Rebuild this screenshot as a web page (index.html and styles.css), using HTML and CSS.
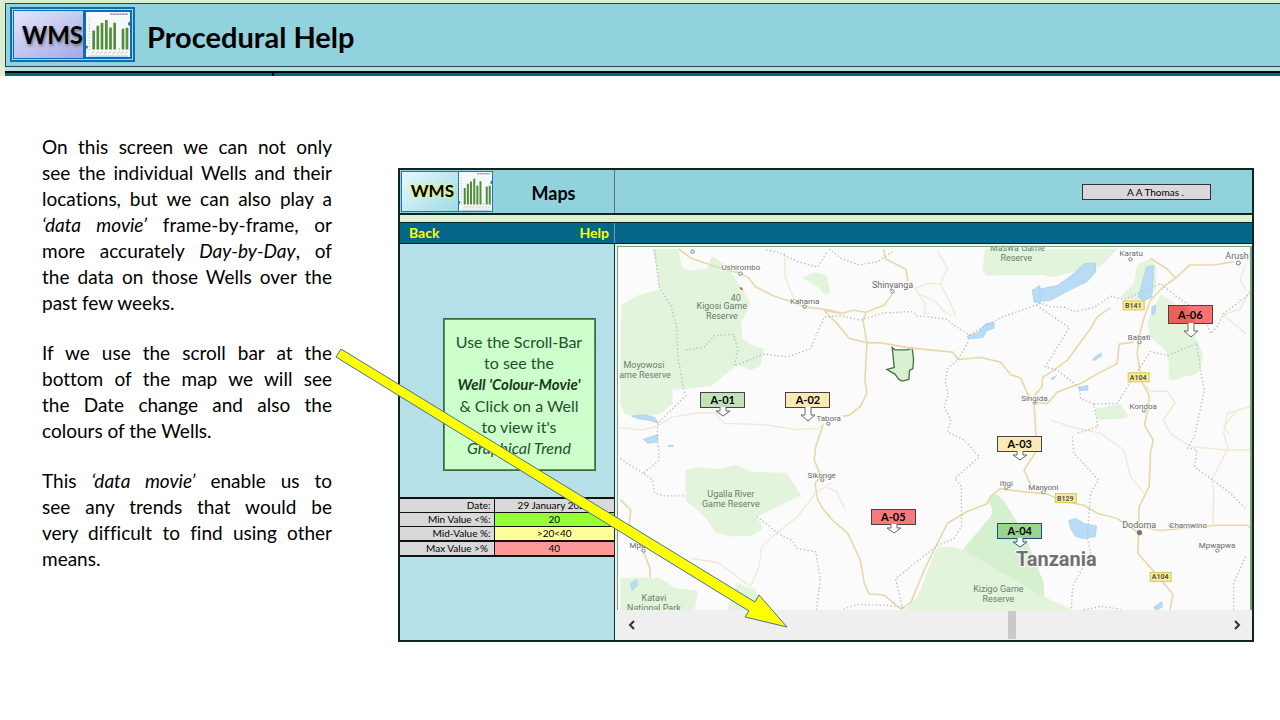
FILE: index.html
```html
<!DOCTYPE html>
<html lang="en">
<head>
<meta charset="utf-8">
<title>WMS Procedural Help</title>
<link rel="stylesheet" href="styles.css">
</head>
<body>
<svg class="defs" aria-hidden="true">
  <symbol id="chart" viewBox="0 0 132 148" preserveAspectRatio="none">
    <rect width="132" height="148" fill="#f7f8f9"/>
    <path d="M73 7h52" stroke="#777" stroke-width="4" stroke-dasharray="7 2"/>
    <path d="M10 22v104" stroke="#999" stroke-width="4" stroke-dasharray="2 8"/>
    <path d="M23 61v62M35.500 45v78M48 36v87M61 26v97M73.500 51v72M86 35v88M111 55v68M123 52v71" stroke="#4f8f3a" stroke-width="8"/>
    <path d="M17 138l8-9M29 138l8-9M41 138l8-9M54 138l8-9M67 138l8-9M80 138l8-9M92 138l8-9M104 138l8-9M116 138l8-9" stroke="#999" stroke-width="2"/>
    <path d="M8 145h118" stroke="#8fc0e4" stroke-width="3"/>
    <path d="M97 122h5" stroke="#7d98c9" stroke-width="3"/>
    <path d="M0 110l6 3-2 7-4 1z" fill="#2d7a46"/>
    <path d="M126 36l6-5v16l-5-4z" fill="#2d7a56"/>
  </symbol>
</svg>

<header class="banner">
  <div class="banner-main">
    <div class="logo logo-large">
      <span class="logo-text">WMS</span>
      <svg class="logo-chart"><use href="#chart"/></svg>
    </div>
    <h1>Procedural Help</h1>
  </div>
  <div class="banner-rule"></div>
</header>

<main>
  <article class="copy">
    <p>On this screen we can not only see&nbsp;the individual Wells and their locations, but we can also play a <em>‘data movie’</em> frame-by-frame, or more accurately <em>Day-by-Day</em>, of the data on those Wells over the past few weeks.</p>
    <p>If we use the scroll bar at the bottom of the map we will see the&nbsp;Date change and also the colours&nbsp;of the Wells.</p>
    <p>This <em>‘data movie’</em> enable us to see&nbsp;any trends that would be very&nbsp;difficult to find using other means.</p>
  </article>

  <section class="app">
    <div class="app-head">
      <div class="app-title">
        <div class="logo logo-small">
          <span class="logo-text">WMS</span>
          <svg class="logo-chart"><use href="#chart"/></svg>
        </div>
        <h2>Maps</h2>
      </div>
      <div class="app-user"><span class="user">A A Thomas .</span></div>
    </div>
    <nav class="app-nav">
      <div class="nav-links"><a href="#back">Back</a><a href="#help">Help</a></div>
    </nav>
    <div class="app-body">
      <aside class="side">
        <div class="note">Use the Scroll-Bar<br>to see the<br><b><i>Well 'Colour-Movie'</i></b><br>&amp; Click on a Well<br>to view it's<br><i>Graphical Trend</i></div>
        <table class="limits">
          <tr><th scope="row">Date:</th><td class="date">29 January 2021</td></tr>
          <tr><th scope="row">Min Value &lt;%:</th><td class="min">20</td></tr>
          <tr><th scope="row">Mid-Value %:</th><td class="mid">&gt;20&lt;40</td></tr>
          <tr><th scope="row">Max Value &gt;%&nbsp;</th><td class="max">40</td></tr>
        </table>
      </aside>
      <div class="viewer">
        <div class="map">
          <svg class="map-art" viewBox="0 0 633 364" preserveAspectRatio="none">
            <g transform="scale(.33333)">
              <!-- reserves -->
              <g class="park">
                <path d="M104 6H180L193 60L215 72L268 64L282 27L330 60L368 118L398 168L370 230L374 275L400 295L438 305L428 358L398 370L360 352L280 418L175 428L140 150L125 125z"/>
                <path d="M10 175L60 145L125 128L150 180L178 250L182 330L196 420L164 426V470L130 500L60 512L20 500L6 470z"/>
                <path d="M552 92L590 76L626 84L638 138L620 142L600 120z"/>
                <path d="M203 670L240 662L300 668L352 654L400 676L506 678L550 746L418 810L434 848L400 868L340 870L290 856L268 820L240 790L203 762z"/>
                <path d="M7 994H125L170 1024L240 1034L230 1092H7z"/>
                <path d="M358 1008L390 1024L410 1026L430 1060L440 1092H328z"/>
                <path d="M1103 6H1500L1450 58L1370 74L1300 92L1280 84L1105 86L1095 65z"/>
                <path d="M1600 34L1618 60L1616 130L1580 160L1530 158L1510 150L1550 110L1560 55z"/>
                <path d="M1630 142L1690 180L1745 290L1758 325L1750 370L1730 385L1700 390L1670 401L1655 398L1655 350L1645 310L1600 270L1590 230z"/>
                <path d="M1434 486L1510 472L1535 510L1520 516L1440 518z"/>
                <path d="M858 1092L900 1050L960 900L1010 902L1036 910L1300 1060L1370 1092z"/>
              </g>
              <path class="park-deep" d="M1118 746L1140 744L1160 764L1220 860L1280 1010V1052L1036 910L1120 810L1126 790L1116 770z"/>
              <path class="zone" d="M824 302L832 309H868L884 304L888 338L886 366L876 370L874 398L854 403L844 398L832 382L808 368L830 362z"/>
              <!-- lakes -->
              <g class="lake">
                <path d="M1250 166L1258 128L1320 116L1370 80L1400 50L1434 48L1436 74L1410 104L1360 128L1300 160z"/>
                <path d="M1588 60L1610 56L1604 150L1580 162L1564 150z"/>
                <path d="M1048 268L1080 258L1106 230L1130 226V244L1108 252L1096 272L1058 276z"/>
                <path d="M1244 130L1268 116V172L1250 162z"/>
                <path d="M1354 822L1376 816L1402 832L1438 838L1434 870L1400 876L1376 870L1362 850z"/>
                <path d="M1604 180L1616 174L1614 198L1604 204z"/>
                <path d="M1426 336L1452 318V328L1430 342zM1382 422L1412 416V430L1390 432zM1300 396L1318 386L1308 398z"/>
                <path d="M40 508L80 504L110 512L122 530L100 522L60 516zM76 578L118 564V586L90 590zM150 596h16v3h-16z"/>
                <path d="M38 1010L56 1000L58 1018L42 1032zM1610 1082L1634 1066L1636 1082L1616 1092z"/>
              </g>
              <!-- roads -->
              <g class="road">
                <path d="M182 6L220 34L290 58L370 80L392 92L414 120L470 148L520 164L562 180L640 190L672 200"/>
                <path d="M618 190L672 200L706 190L746 196L800 174L824 142"/>
                <path d="M618 190L660 232L694 274L748 288L790 288L880 304L1006 316L1022 338L1090 332L1150 346L1180 384L1210 394L1230 440L1250 468L1256 568L1254 618L1220 670L1240 714"/>
                <path d="M798 6L804 36L864 66L872 104M746 196L736 220L748 288L742 400L748 440L728 480L694 506L676 508"/>
                <path d="M616 535L594 600L590 640L610 690L592 710L600 760L618 790L646 822L690 860L728 940L740 1010L754 1042L800 1046L850 1088L880 1068L920 970L960 890L990 830L1050 794L1108 772L1120 750L1148 726L1220 736L1290 742L1330 762L1400 776L1440 800L1500 816L1566 860"/>
                <path d="M1850 44L1790 54L1718 54L1680 90L1640 118L1600 160L1578 220L1566 270L1560 320L1568 370L1574 406L1596 446L1594 480L1582 535L1608 580L1600 620L1596 720L1566 780L1564 840L1630 852L1800 836H1890L1899 842"/>
                <path d="M1564 862L1562 920L1600 964L1640 1010L1668 1044L1658 1092"/>
                <path d="M1600 34L1650 66L1676 94M1480 182L1440 210L1420 245L1350 340L1310 370L1276 392L1274 420L1250 448M1250 468L1290 470L1320 436L1390 410L1450 376L1500 350L1506 292L1550 286"/>
                <path d="M7 760L38 790L34 830L80 924L96 964V994"/>
              </g>
              <g class="road road-minor">
                <path d="M500 14L502 90L530 160M6 542L70 550L120 538L160 512L240 498H290L320 530L440 534L530 548L600 546L620 530"/>
                <path d="M220 936L300 948L398 1020L424 960L432 900L474 862L540 810L594 738L640 710"/>
                <path d="M890 124L930 110H968L990 66L960 10M968 110L1000 170L1016 210M900 140L950 160L980 194L1004 208"/>
                <path d="M894 126L924 172L920 200L936 200M628 722L656 734L682 788"/>
                <path d="M1568 400L1600 434L1650 434L1674 468L1638 520L1660 560L1720 600L1830 610H1899M1830 610L1784 700L1790 740L1788 836M1860 490L1820 540L1834 560M1300 520L1360 540L1450 560L1520 610L1540 690L1580 738M1899 480L1830 500L1820 560L1834 610"/>
                <path d="M1899 130L1870 186L1820 204L1886 260M1886 50L1870 100L1886 130"/>
              </g>
              <!-- regional boundaries -->
              <g class="border">
                <path d="M110 10L125 125L160 178L176 240L180 330L196 420L204 446L150 500L120 530L118 550L124 640L76 680L104 700L110 740L140 748H204"/>
                <path d="M204 310L260 300L290 266L348 262L360 310L350 358L436 322L510 330L578 306L620 210L672 206L728 220L800 198L886 194L896 206L984 216L1020 242L1056 264"/>
                <path d="M634 6L670 34L724 54L780 44L830 10M446 8L480 16L540 44L600 60L630 12"/>
                <path d="M1056 264L1050 290L1020 340L990 366L984 406L992 446L980 480L1000 520L990 556L1040 580L1086 630L1012 696L1032 720V840L1010 876L960 896L834 996L856 1092"/>
                <path d="M1056 264L1150 212L1240 180L1270 168L1300 180H1340L1370 194L1430 182L1480 148L1520 158L1630 110L1680 150L1740 190L1770 230L1780 260L1800 240L1820 200L1899 140"/>
                <path d="M1258 176L1356 242L1284 360L1320 370L1386 422L1390 456L1430 472L1442 540L1380 560"/>
                <path d="M1430 472L1500 470L1556 380L1600 314L1650 326L1740 290L1750 370L1762 430L1732 570L1712 604L1740 610L1732 660L1800 710L1840 740L1890 790M1365 570L1370 620L1444 700L1420 740L1410 870L1420 920L1366 1020L1362 1092"/>
                <path d="M418 810L480 860L520 880L540 906L594 916L608 1000L596 1092M7 636L76 680M678 1088L720 1074L800 1076L858 1082M1400 1090L1450 1080L1510 1088M1886 930L1850 1010V1092"/>
              </g>
              <g class="dot">
                <circle cx="224" cy="14" r="5"/><circle cx="368" cy="80" r="5"/><circle cx="561" cy="179" r="5"/><circle cx="825" cy="134" r="5"/><circle cx="1540" cy="37" r="5"/><circle cx="1864" cy="48" r="6"/><circle cx="1567" cy="286" r="5"/><circle cx="1580" cy="491" r="5"/><circle cx="1252" cy="467" r="5"/><circle cx="632" cy="531" r="5"/><circle cx="614" cy="700" r="5"/><circle cx="77" cy="912" r="5"/><circle cx="1167" cy="723" r="5"/><circle cx="1278" cy="736" r="5"/><circle cx="1660" cy="838" r="4"/><circle cx="1801" cy="912" r="5"/>
              </g>
              <circle cx="1567" cy="858" r="8" fill="#777"/>
              <path d="M364 122h10v10z" fill="#e0483c"/>
            </g>
            <g class="place">
              <text x="123" y="23">Ushirombo</text><text x="187" y="57">Kahama</text>
              <text class="mid-label" x="275" y="41">Shinyanga</text>
              <text x="514" y="9">Karatu</text><text class="mid-label" x="620" y="12">Arush</text>
              <text x="522" y="93">Babati</text><text x="526" y="162">Kondoa</text>
              <text x="417" y="154">Singida</text><text x="211" y="174">Tabora</text>
              <text x="204" y="231">Sikonge</text><text x="26" y="301">Mpanda</text>
              <text x="389" y="239">Itigi</text><text x="426" y="243">Manyoni</text>
              <text class="mid-label" x="522" y="281">Dodoma</text><text x="571" y="281">Chamwino</text><text x="600" y="301">Mpwapwa</text>
            </g>
            <g class="reserve">
              <text x="118" y="54">40</text>
              <text x="104" y="62">Kigosi Game</text><text x="104" y="72">Reserve</text>
              <text x="26" y="121">Moyowosi</text><text x="27" y="131">ame Reserve</text>
              <text x="400" y="4">Maswa Game</text><text x="399" y="14">Reserve</text>
              <text x="113" y="250">Ugalla River</text><text x="113" y="260">Game Reserve</text>
              <text x="36" y="355">Katavi</text><text x="36" y="365">National Park</text>
              <text x="381" y="346">Kizigo Game</text><text x="381" y="356">Reserve</text>
            </g>
            <text class="country" x="439" y="320">Tanzania</text>
            <g class="shield">
              <rect x="506" y="54" width="21" height="9"/><text x="516" y="61">B141</text>
              <rect x="511" y="126" width="21" height="9"/><text x="521" y="133">A104</text>
              <rect x="438" y="247" width="21" height="9"/><text x="448" y="254">B129</text>
              <rect x="533" y="326" width="21" height="9"/><text x="543" y="333">A104</text>
            </g>
          </svg>
          <button class="well green a01" type="button">A-01<svg viewBox="0 0 16 10"><path d="M5 0v4H1l7 5 7-5h-4V0"/></svg></button>
          <button class="well cream a02" type="button">A-02<svg class="tall" viewBox="0 0 16 15"><path d="M5 0v8H1l7 6 7-6h-4V0"/></svg></button>
          <button class="well cream a03" type="button">A-03<svg viewBox="0 0 16 10"><path d="M5 0v4H1l7 5 7-5h-4V0"/></svg></button>
          <button class="well leaf a04" type="button">A-04<svg viewBox="0 0 16 10"><path d="M5 0v4H1l7 5 7-5h-4V0"/></svg></button>
          <button class="well red a05" type="button">A-05<svg viewBox="0 0 16 10"><path d="M5 0v4H1l7 5 7-5h-4V0"/></svg></button>
          <button class="well red a06" type="button">A-06<svg class="tall" viewBox="0 0 16 15"><path d="M5 0v8H1l7 6 7-6h-4V0"/></svg></button>
        </div>
        <div class="scroller">
          <button type="button" aria-label="Previous day"><svg viewBox="0 0 8 10"><path d="M6 1L2 5l4 4"/></svg></button>
          <input type="range" min="0" max="1000" value="636" aria-label="Date">
          <button type="button" aria-label="Next day"><svg viewBox="0 0 8 10"><path d="M2 1l4 4-4 4"/></svg></button>
        </div>
      </div>
    </div>
  </section>

  <svg class="pointer" viewBox="0 0 456 284" aria-hidden="true"><path d="M7 2L421 255L425 248L453 280L411 270L415 264L2 10z"/></svg>
</main>
</body>
</html>
```

FILE: styles.css
```css
* { box-sizing: border-box; }

body {
  margin: 0;
  background: #fff;
  color: #000;
  font-family: Lato, "Liberation Sans", sans-serif;
  font-variant-ligatures: none;
}

h1, h2, p { margin: 0; }
button { font-family: inherit; }
svg { display: block; }
.defs { position: absolute; width: 0; height: 0; }

/* page banner */
.banner {
  padding: 3px 0 0 5px;
  background: #daefcf;
}
.banner-main {
  display: flex;
  align-items: center;
  gap: 12px;
  height: 64px;
  padding-left: 4px;
  border: solid #25484d;
  border-width: 1px 0 1px 1px;
  background: #92d2dc;
}
.banner-rule {
  height: 9px;
  border-top: 4px solid #b5e0e8;
  background: linear-gradient(#000 2px, transparent 2px), linear-gradient(90deg, transparent 267px, #000 267px, #000 269px, transparent 269px), #056788;
}
h1 { padding-top: 4px; font-size: 29px; line-height: 36px; }

.logo { display: flex; }
.logo-text { display: flex; align-items: center; justify-content: flex-end; font-weight: 700; }
.logo-large {
  width: 125px;
  height: 55px;
  margin-bottom: 2px;
  padding: 2px;
  border: 1px solid #0b6cb8;
  outline: 1px solid #0b6cb8;
  outline-offset: -2px;
  background: #a8d8ee;
}
.logo-large .logo-text {
  flex: 1;
  border: 1px solid #0b6cb8;
  background: linear-gradient(150deg, #e4e6fb, #a4a9e6);
  font-size: 24px;
  text-shadow: 1px 2px 3px #777;
}
.logo-large .logo-chart { width: 48px; height: 49px; border: 2px solid #0b6cb8; }
.logo-small {
  width: 92px;
  height: 41px;
  border: 1px solid #1a78bd;
  background: #c9edf3;
}
.logo-small .logo-text {
  flex: 1;
  padding: 0 4px 2px 0;
  background: linear-gradient(135deg, #e8f8fb, #9edbe7);
  font-size: 17px;
  text-shadow: 0 0 3px #e9f56c, 0 0 4px #e9f56c;
}
.logo-small .logo-chart { width: 34px; height: 39px; border-left: 1px solid #1a78bd; }

/* page content */
main {
  position: relative;
  display: flex;
  align-items: flex-start;
  gap: 66px;
  padding: 58px 26px 0 42px;
}
.copy {
  flex: none;
  width: 290px;
  display: flex;
  flex-direction: column;
  gap: 24px;
  font-size: 19px;
  line-height: 26px;
  text-align: justify;
}

.app {
  flex: 1;
  margin-top: 34px;
  border: 2px solid #10251f;
  background: #def1d3;
}
.app-head {
  display: grid;
  grid-template-columns: 215px 1fr;
  height: 45px;
  border-bottom: 2px solid #10251f;
  background: #92d2dc;
}
.app-title { display: flex; align-items: center; padding-left: 1px; border-right: 1px solid #557a80; }
h2 { flex: 1; padding-top: 2px; font-size: 18px; line-height: 24px; text-align: center; }
.app-user { display: flex; align-items: center; justify-content: flex-end; padding-right: 41px; }
.user {
  width: 129px;
  padding-left: 18px;
  border: 1px solid #333;
  background: #d9d9d9;
  font-size: 10px;
  line-height: 14px;
  text-align: center;
}
.app-nav {
  display: grid;
  grid-template-columns: 215px 1fr;
  margin-top: 7px;
  border: solid #06242c;
  border-width: 1px 0;
  background: #056788;
}
.nav-links {
  display: flex;
  justify-content: space-between;
  padding: 0 5px 0 9px;
  border-right: 1px solid #7d9a9f;
}
.nav-links a { color: #ff0; font-size: 14px; font-weight: 700; line-height: 20px; text-decoration: none; }

.app-body { display: grid; grid-template-columns: 215px 1fr; }
.side {
  display: flex;
  flex-direction: column;
  gap: 26px;
  padding-top: 74px;
  border-right: 1px solid #1d3035;
  background: #b5e0e7;
}
.note {
  align-self: center;
  width: 153px;
  margin-left: 24px;
  padding: 12px 0;
  border: 1px solid #3a6f3a;
  outline: 1px solid #5b8d58;
  outline-offset: -2px;
  background: #cfc;
  color: #24502a;
  font-size: 16px;
  line-height: 21px;
  text-align: center;
}
.note b { color: #173a1b; font-size: 15px; }
.limits {
  width: 100%;
  border-collapse: collapse;
  font-size: 10px;
  line-height: 13px;
}
.limits th, .limits td { padding: 0 3px 0 0; border: 1px solid #111; }
.limits th { width: 94px; border-left: 0; background: #d9d9d9; font-weight: 400; text-align: right; }
.limits td { padding: 0; border-right: 0; text-align: center; }
.limits tr:first-child > *, .limits tr:last-child > * { border-top-width: 2px; }
.limits tr:last-child > * { border-bottom-width: 2px; }
.date { background: #d9d9d9; }
.min { background: #9f3; }
.mid { background: #ff9; }
.max { background: #f99; }

/* map */
.viewer { padding-left: 2px; background: linear-gradient(90deg, #e9f1ee 2px, #efefef 2px); }
.map {
  position: relative;
  margin-top: 2px;
  border: solid #7da47c;
  border-width: 1px 2px 0 1px;
  background: #fbfbfb;
}
.map-art { width: 100%; height: auto; overflow: hidden; }
.park { fill: #e2f4dc; }
.park-deep { fill: #d5f0ce; }
.zone { fill: #d8f0d0; stroke: #47734a; stroke-width: 4; }
.lake { fill: #b8dcf6; stroke: #a1cbe6; stroke-width: 2; }
.road { fill: none; stroke: #e9d9aa; stroke-width: 5; stroke-linejoin: round; }
.road-minor { stroke: #f2e8d3; stroke-width: 4; }
.border { fill: none; stroke: #b9b9c0; stroke-width: 4; stroke-dasharray: 4 7; }
.dot { fill: #fff; stroke: #777; stroke-width: 3; }
.map-art text { font-family: Roboto, "Liberation Sans", sans-serif; text-anchor: middle; }
.place, .reserve { fill: #666; font-size: 8px; paint-order: stroke; stroke: #fff; stroke-width: 1px; }
.mid-label { font-size: 9px; }
.reserve { fill: #6b7d6b; font-size: 9px; stroke: none; }
.country { fill: #707070; font-size: 20px; font-weight: 700; paint-order: stroke; stroke: #fff; stroke-width: 2px; }
.shield rect { fill: #f8ec94; stroke: #d7c660; }
.shield text { fill: #555; font-size: 7px; font-weight: 700; }

.well {
  position: absolute;
  width: 45px;
  height: 16px;
  padding: 0;
  border: 1px solid #444;
  color: #000;
  font-size: 11px;
  font-weight: 700;
  line-height: 14px;
}
.well svg {
  position: absolute;
  top: 14px;
  left: 14px;
  width: 16px;
  height: 10px;
  fill: #fff;
  stroke: #666;
}
.well .tall { height: 15px; }
.green { background: #c0e2b8; }
.cream { background: #fbeab4; }
.leaf { border-color: #234a7a; background: #98d690; }
.leaf svg { stroke: #346090; }
.red { background: #f77a7a; }
.a01 { left: 13%; top: 40%; }
.a02 { left: 26.5%; top: 40%; }
.a03 { left: 60%; top: 52%; }
.a04 { left: 60%; top: 76%; }
.a05 { left: 40%; top: 72%; }
.a06 { left: 87%; top: 16%; height: 19px; background: linear-gradient(60deg, #e86058 45%, #fa7272 55%); line-height: 17px; }
.a06 svg { top: 17px; }

.scroller { display: flex; align-items: stretch; height: 30px; background: #efefef; }
.scroller button { display: grid; place-items: center; width: 30px; padding: 0; border: 0; background: none; }
.scroller button svg { width: 8px; height: 10px; fill: none; stroke: #333; stroke-width: 2; }
.scroller input { flex: 1; min-width: 0; margin: 0; appearance: none; background: none; }
.scroller input::-webkit-slider-thumb { appearance: none; width: 8px; height: 28px; border: 0; border-radius: 0; background: #c9c9c9; }

/* arrow from the text to the scroll bar */
.pointer {
  position: absolute;
  top: 271px;
  left: 334px;
  width: 456px;
  height: 284px;
  pointer-events: none;
}
.pointer path { fill: #ff0; stroke: #41719c; }
```
